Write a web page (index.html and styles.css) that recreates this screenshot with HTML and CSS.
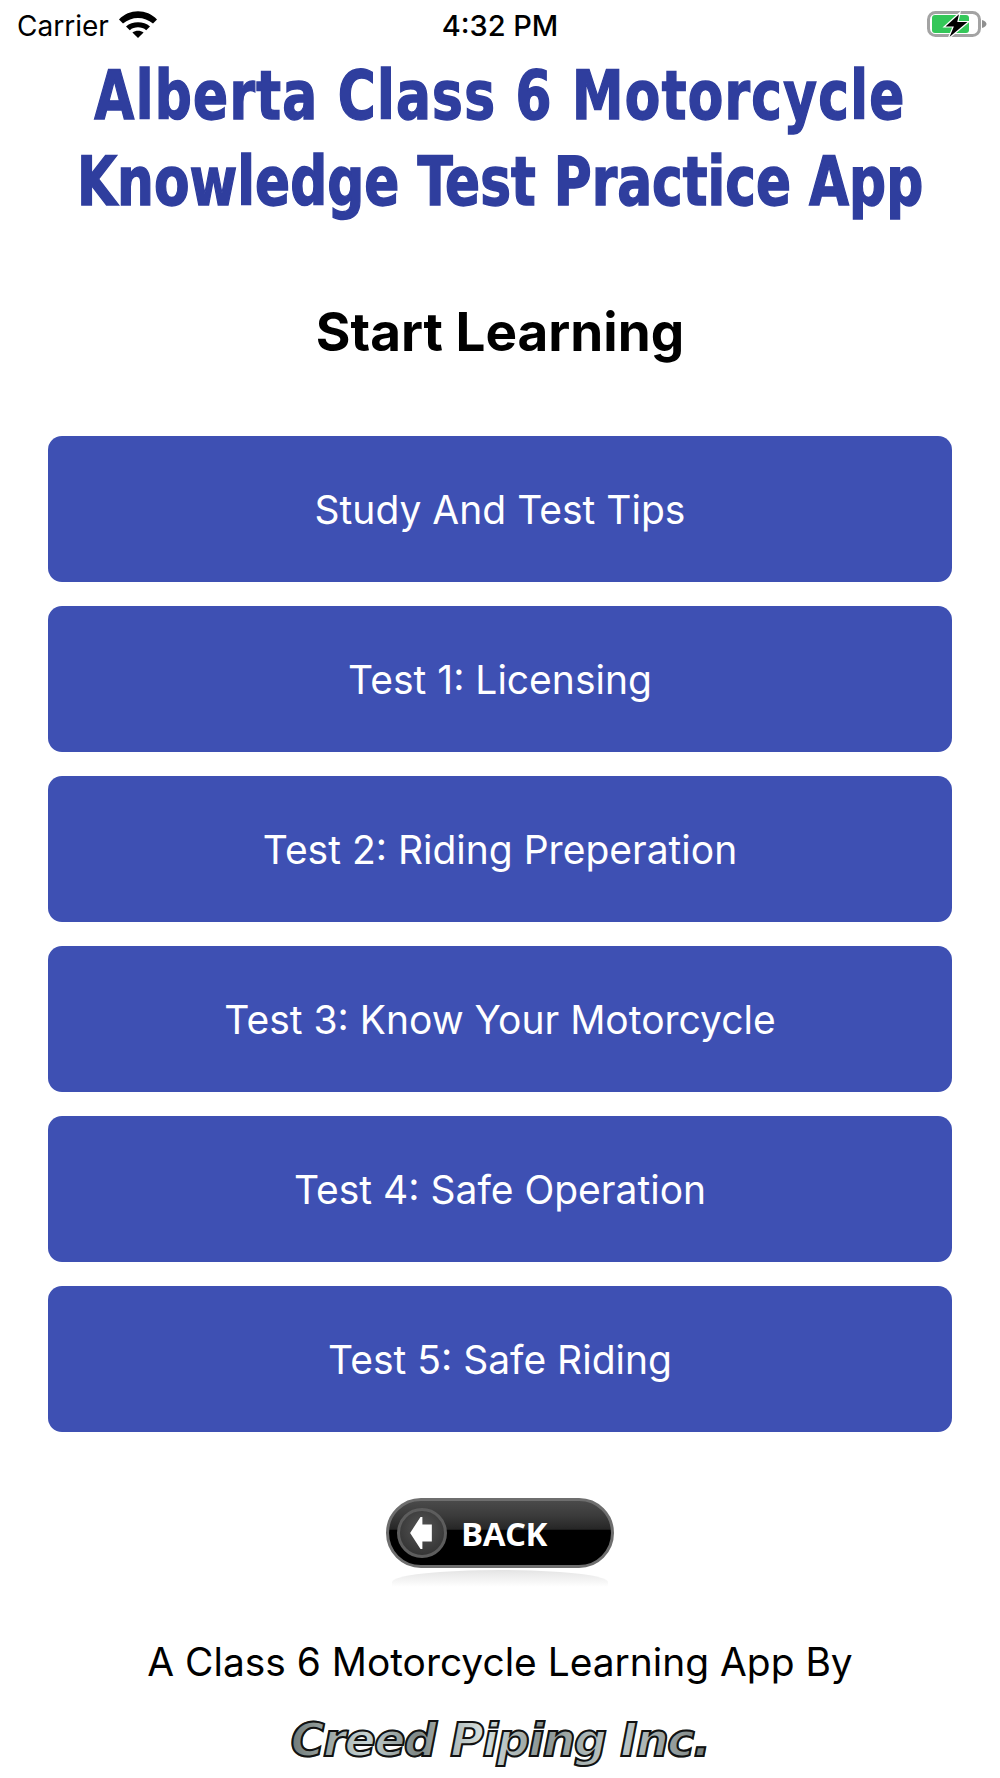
FILE: index.html
```html
<!DOCTYPE html>
<html lang="en">
<head>
<meta charset="utf-8">
<title>Alberta Class 6 Motorcycle Knowledge Test Practice App</title>
<link rel="stylesheet" href="styles.css">
</head>
<body>
<div class="screen">
  <header class="status-bar">
    <div class="status-left">
      <span class="carrier">Carrier</span>
      <svg class="wifi" viewBox="0 0 38 28" aria-hidden="true">
        <path d="M0 9.5 C10 -1.5 28 -1.5 38 9.5 L34 13.6 C25.5 6 12.5 6 4 13.6 Z"/>
        <path d="M7 16.4 C13.4 10.8 24.6 10.8 31 16.4 L27.2 20.2 C22.6 16.4 15.4 16.4 10.8 20.2 Z"/>
        <path d="M13.4 22.6 C16.8 20.2 21.2 20.2 24.6 22.6 L19 28 Z"/>
      </svg>
    </div>
    <span class="clock">4:32 PM</span>
    <svg class="battery" viewBox="0 0 60 28" aria-hidden="true">
      <rect class="battery-shell" x="1.5" y="1.5" width="51" height="23" rx="7"/>
      <rect class="battery-fill" x="5" y="4" width="37" height="18" rx="3"/>
      <path class="battery-cap" d="M55 9 C58 10 59.5 11.5 59.5 13 C59.5 14.5 58 16 55 17 Z"/>
      <path class="battery-bolt" d="M33 1.5 L17 16 H26 L21 28 L42 10.5 H31 Z"/>
    </svg>
  </header>

  <main class="content">
    <h1 class="app-title">
      <span class="title-line">Alberta Class 6 Motorcycle</span>
      <span class="title-line title-line-tight">Knowledge Test Practice App</span>
    </h1>
    <h2 class="section-title">Start Learning</h2>

    <nav class="menu">
      <a class="menu-item">Study And Test Tips</a>
      <a class="menu-item">Test 1: Licensing</a>
      <a class="menu-item">Test 2: Riding Preperation</a>
      <a class="menu-item">Test 3: Know Your Motorcycle</a>
      <a class="menu-item">Test 4: Safe Operation</a>
      <a class="menu-item">Test 5: Safe Riding</a>
    </nav>

    <div class="back-wrap">
      <a class="back-button">
        <span class="back-circle">
          <svg class="back-arrow" viewBox="0 0 24 36" aria-hidden="true">
            <path d="M12 1 L14 1 V9 H24 V27 H14 V35 H12 L1 18 Z"/>
          </svg>
        </span>
        <span class="back-label">BACK</span>
      </a>
      <div class="back-reflection"></div>
    </div>

    <p class="credit">A Class 6 Motorcycle Learning App By</p>
    <p class="brand">Creed Piping Inc.</p>
  </main>
</div>
</body>
</html>
```

FILE: styles.css
```css
* {
  box-sizing: border-box;
}

html,
body {
  margin: 0;
  background: #fff;
}

.screen {
  width: 1000px;
  height: 1778px;
  overflow: hidden;
  font-family: Inter, "Liberation Sans", sans-serif;
  color: #000;
}

/* Status bar */
.status-bar {
  position: relative;
  display: flex;
  align-items: center;
  justify-content: space-between;
  height: 50px;
  padding: 2px 13px 0 17px;
}

.status-left {
  display: flex;
  align-items: center;
  gap: 10px;
}

.carrier {
  font-size: 28px;
  line-height: 48px;
}

.wifi {
  width: 38px;
  height: 28px;
  margin-bottom: 5px;
}

.clock {
  position: absolute;
  left: 0;
  right: 0;
  text-align: center;
  font-size: 29px;
  font-weight: 500;
  line-height: 50px;
}

.battery {
  width: 60px;
  height: 28px;
  margin-top: -2px;
  overflow: visible;
}

.battery-shell {
  fill: none;
  stroke: #a3a3a3;
  stroke-width: 3;
}

.battery-fill {
  fill: #34c759;
}

.battery-cap {
  fill: #8f8f8f;
}

.battery-bolt {
  fill: #000;
  stroke: #fff;
  stroke-width: 1.2;
}

/* Headings */
.content {
  display: flex;
  flex-direction: column;
  align-items: center;
}

.app-title {
  width: 1000px;
  margin: 3px 0 0;
  font-family: "DejaVu Sans Condensed", "DejaVu Sans", sans-serif;
  font-size: 68px;
  font-weight: 700;
  line-height: 86px;
  letter-spacing: 1.5px;
  text-align: center;
  white-space: nowrap;
  color: #2f3e9e;
  -webkit-text-stroke: 1.4px #2f3e9e;
  transform: scaleX(0.846);
}

.title-line {
  display: block;
}

.title-line-tight {
  letter-spacing: 0;
}

.section-title {
  margin: 75px 0 0;
  font-size: 53px;
  font-weight: 700;
  line-height: 64px;
}

/* Menu buttons */
.menu {
  display: flex;
  flex-direction: column;
  gap: 24px;
  width: 904px;
  margin-top: 72px;
}

.menu-item {
  display: flex;
  align-items: center;
  justify-content: center;
  height: 146px;
  border-radius: 14px;
  background: #3e50b3;
  color: #fff;
  font-size: 39px;
}

/* Back button */
.back-wrap {
  width: 232px;
  margin-top: 66px;
}

.back-button {
  display: flex;
  align-items: center;
  width: 228px;
  height: 70px;
  margin-left: 2px;
  padding-left: 8px;
  border: 3px solid #6e6e6e;
  border-radius: 35px;
  background: linear-gradient(#4a4a4a 0, #3a3a3a 24%, #262626 44%, #000 46%, #000 100%);
  color: #fff;
}

.back-circle {
  display: flex;
  align-items: center;
  justify-content: center;
  flex: none;
  width: 50px;
  height: 50px;
  border: 3px solid #5d5d5d;
  border-radius: 50%;
  background: radial-gradient(circle at 50% 40%, #555, #2c2c2c);
}

.back-arrow {
  width: 23px;
  height: 34px;
  margin-right: 4px;
  fill: #fff;
}

.back-label {
  margin-left: 14px;
  font-family: "Open Sans", "Liberation Sans", sans-serif;
  font-size: 33px;
  font-weight: 700;
  letter-spacing: -0.5px;
}

.back-reflection {
  width: 216px;
  height: 20px;
  margin: 2px auto 0;
  border-radius: 50% 50% 0 0 / 60% 60% 0 0;
  background: linear-gradient(#e4e4e4, #fff 85%);
}

/* Footer */
.credit {
  margin: 47px 0 0;
  font-size: 38.9px;
  line-height: 50px;
}

.brand {
  margin: 25px 0 0;
  font-family: "DejaVu Sans", sans-serif;
  font-size: 46px;
  font-style: oblique;
  font-weight: 700;
  line-height: 56px;
  letter-spacing: -1.4px;
  background: linear-gradient(90deg, #707a78, #c7d3d2 18%, #7f8886 30%, #d7e2e2 46%, #8a9492 60%, #c2cccc 78%, #777f7e);
  -webkit-background-clip: text;
  background-clip: text;
  color: transparent;
  -webkit-text-stroke: 2px #111;
}
```
